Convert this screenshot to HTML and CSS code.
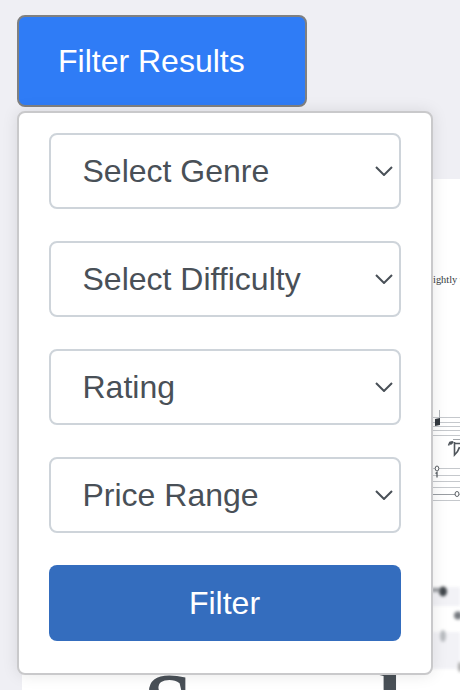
FILE: index.html
```html
<!DOCTYPE html>
<html lang="en">
<head>
<meta charset="utf-8">
<title>Sheet music</title>
<link rel="stylesheet" href="styles.css">
</head>
<body>
<main class="page">
  <section class="sheet">
    <span class="sheet-note">ightly t</span>
    <svg class="notation" width="28" height="270" viewBox="432 410 28 270">
      <g stroke="#c5c8cc" stroke-width="1">
        <path d="M432 417.5h28M432 422.5h28M432 426.5h28M432 430.5h28M432 435.5h28M432 468.5h28M432 475.5h28M432 481.5h28M432 487.5h28M432 494.5h28M432 500.5h28"/>
      </g>
      <path d="M439.500 410v10" stroke="#b0b4b8"/>
      <path d="M435 419l5-1v7l-5 1z" fill="#343a40"/>
      <path d="M453 439.500h7" stroke="#a0a4a8"/>
      <path d="M448.500 445.500l1.500-3.500M449.500 442.500q4-1.500 3 0t-2.500 1.500M454.500 442v13q4-4 5-8M455 443.500h5" fill="none" stroke="#50565c" stroke-width="1.600"/>
      <ellipse cx="437" cy="468.500" rx="1.800" ry="2.500" fill="#fff" stroke="#5b6065"/>
      <path d="M435.500 473.500l1.500-1v5" fill="none" stroke="#5b6065" stroke-width="1.300"/>
      <path d="M432 494.500h24" stroke="#999da2"/>
      <ellipse cx="457" cy="494" rx="2" ry="2.500" fill="#fff" stroke="#5b6065"/>
      <g class="blurred">
        <path d="M430 587h30v19h-30zM432 632h28v37h-28z" fill="#f2f2f6"/>
        <ellipse cx="443" cy="591.500" rx="4" ry="5" fill="#41464b"/>
        <path d="M432 590h8" stroke="#9a9da1" stroke-width="4"/>
        <ellipse cx="458" cy="615.500" rx="4" ry="4" fill="#777b80"/>
        <ellipse cx="443" cy="636" rx="3" ry="6" fill="#b9bcc0"/>
        <ellipse cx="460" cy="667" rx="2" ry="5" fill="#aaa"/>
      </g>
    </svg>
    <h1 class="sheet-title">Second</h1>
  </section>
  <div class="filters">
    <button class="toggle" type="button">Filter Results</button>
    <form class="panel">
      <div class="field">Select Genre<svg class="chevron" viewBox="0 0 18 10"><path d="M1 1l8 8 8-8"/></svg></div>
      <div class="field">Select Difficulty<svg class="chevron" viewBox="0 0 18 10"><path d="M1 1l8 8 8-8"/></svg></div>
      <div class="field">Rating<svg class="chevron" viewBox="0 0 18 10"><path d="M1 1l8 8 8-8"/></svg></div>
      <div class="field">Price Range<svg class="chevron" viewBox="0 0 18 10"><path d="M1 1l8 8 8-8"/></svg></div>
      <button class="submit" type="button">Filter</button>
    </form>
  </div>
</main>
</body>
</html>
```
FILE: styles.css
```css
* { box-sizing: border-box; }
body {
  margin: 0;
  background: #efeff4;
  font: 32px/1.2 "Liberation Sans", Arial, sans-serif;
  color: #495057;
}
.page {
  position: relative;
  height: 690px;
  overflow: hidden;
  padding: 15px 17px;
}
.sheet {
  position: absolute;
  inset: 179px 0 0 22px;
  background: #fff;
}
.sheet-note {
  position: absolute;
  left: 411px;
  top: 94px;
  font: 10.4px/14px "Liberation Serif", serif;
  color: #343a40;
  white-space: nowrap;
}
.notation {
  position: absolute;
  left: 410px;
  top: 231px;
}
.blurred { filter: blur(1.8px); }
.sheet-title {
  position: absolute;
  left: 122px;
  top: 476px;
  margin: 0;
  font: bold 88px/100px "Liberation Serif", serif;
  letter-spacing: -2.3px;
  white-space: nowrap;
}
.filters {
  position: relative;
  display: flex;
  flex-direction: column;
  gap: 4px;
}
.toggle, .submit {
  font: inherit;
  color: #fff;
  border-radius: 8px;
}
.toggle {
  width: 290px;
  height: 92px;
  padding: 0 39px;
  border: 2px solid #808080;
  background: #2f7cf6;
  text-align: left;
}
.panel {
  display: flex;
  flex-direction: column;
  gap: 32px;
  width: 416px;
  height: 564px;
  padding: 20px 30px;
  border: 2px solid #c9c9cb;
  border-radius: 8px;
  background: #fff;
  box-shadow: 0 0 16px rgba(0, 0, 0, .1);
}
.field {
  display: flex;
  align-items: center;
  justify-content: space-between;
  height: 76px;
  padding: 0 6px 0 31.5px;
  border: 2px solid #ced4da;
  border-radius: 8px;
}
.chevron {
  width: 18px;
  height: 10px;
  fill: none;
  stroke: #495057;
  stroke-width: 2;
}
.submit {
  height: 76px;
  padding: 0 7px 0 6px;
  border: 0;
  background: #346dbe;
}
```
